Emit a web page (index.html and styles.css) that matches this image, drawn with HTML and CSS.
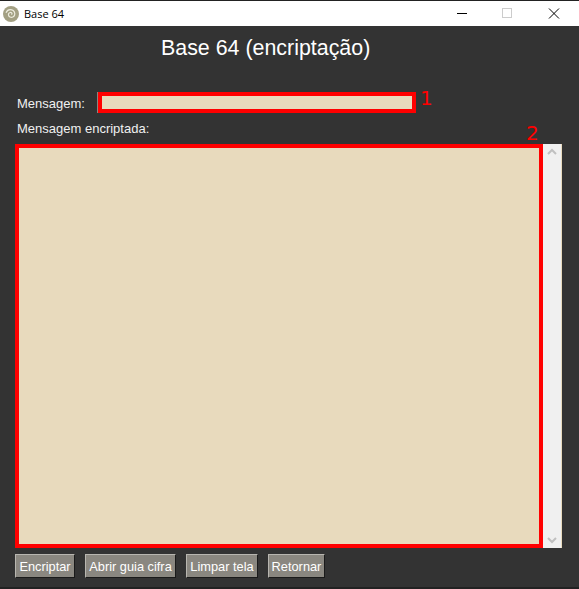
FILE: index.html
```html
<!DOCTYPE html>
<html lang="pt">
<head>
    <meta charset="UTF-8">
    <meta name="viewport" content="width=device-width, initial-scale=1.0">
    <title>Base 64</title>
    <link rel="stylesheet" href="styles.css">
</head>
<body>

<div class="window">
    <div class="titlebar">
        <svg class="app-icon" width="16" height="16" viewBox="0 0 16 16">
            <circle cx="8" cy="8" r="8" fill="#a3a083"/>
            <path d="M8.300 8.400c.7-.2.9-1 .4-1.500-.8-.8-2.300-.5-2.900.5-.8 1.300-.1 3 1.300 3.600 1.800.8 3.900-.2 4.500-2 .7-2.200-.6-4.500-2.800-5.100C6.500 3.300 4 4.500 3 6.800" fill="none" stroke="#eeeddf" stroke-width="1.200"/>
        </svg>
        <span class="window-title">Base 64</span>
        <div class="window-controls">
            <svg class="control" width="46" height="25" viewBox="0 0 46 25"><path d="M18 12.500h10" stroke="#000" fill="none"/></svg>
            <svg class="control" width="46" height="25" viewBox="0 0 46 25"><rect x="17.500" y="7.500" width="9" height="9" stroke="#ccc" fill="none"/></svg>
            <svg class="control" width="46" height="25" viewBox="0 0 46 25"><path d="M18 7.500l10 10M28 7.500l-10 10" stroke="#000" fill="none"/></svg>
        </div>
    </div>

    <div class="content">
        <h1>Base 64 (encriptação)</h1>

        <div class="message-row">
            <label class="field-label" for="message">Mensagem:</label>
            <div class="message-field">
                <input id="message" class="message-input" type="text">
                <span class="marker marker-one">1</span>
            </div>
        </div>

        <div class="field-label encrypted-label">Mensagem encriptada:</div>

        <div class="output-row">
            <textarea class="output-text"></textarea>
            <span class="marker marker-two">2</span>
            <div class="scrollbar">
                <svg width="18" height="16" viewBox="0 0 18 16"><path d="M5 10l4-4 4 4" fill="none" stroke="#c0c0c0" stroke-width="2"/></svg>
                <svg width="18" height="16" viewBox="0 0 18 16"><path d="M5 6l4 4 4-4" fill="none" stroke="#c0c0c0" stroke-width="2"/></svg>
            </div>
        </div>

        <div class="buttons">
            <button class="btn-encrypt">Encriptar</button>
            <button class="btn-guide">Abrir guia cifra</button>
            <button class="btn-clear">Limpar tela</button>
            <button class="btn-back">Retornar</button>
        </div>
    </div>
</div>

</body>
</html>
```

FILE: styles.css
```css
/* Reset */
* {
    margin: 0;
    padding: 0;
    box-sizing: border-box;
}

body {
    width: 579px;
    height: 589px;
    overflow: hidden;
    background: #333333;
    font-family: 'Liberation Sans', Arial, sans-serif;
}

/* Window frame */
.window {
    height: 589px;
    display: flex;
    flex-direction: column;
    border-top: 1px solid #222;
    border-bottom: 2px solid #222;
}

.titlebar {
    height: 25px;
    flex: none;
    display: flex;
    align-items: center;
    background: #ffffff;
    padding-left: 3px;
}

.app-icon {
    margin-right: 5px;
}

.window-title {
    font-family: 'Open Sans', sans-serif;
    font-size: 11px;
    color: #000;
}

.window-controls {
    margin-left: auto;
    margin-right: 2px;
    display: flex;
}

/* Content */
.content {
    flex: 1;
    padding: 10px 17px 0 15px;
    display: flex;
    flex-direction: column;
}

h1 {
    font-size: 21.4px;
    font-weight: normal;
    line-height: 24px;
    color: #ffffff;
    padding-left: 146px;
    height: 56px;
}

.field-label {
    font-size: 13px;
    color: #f0f0f0;
    padding-left: 2px;
}

.message-row {
    display: flex;
    align-items: center;
    height: 21px;
}

.message-row .field-label {
    width: 82px;
    flex: none;
    padding-top: 1px;
}

.message-field {
    position: relative;
    border-left: 1px solid #8a8780;
}

.message-input {
    display: block;
    width: 318px;
    height: 21px;
    background: #e8dabd;
    border: 4px solid #ff0000;
    outline: none;
}

/* Red annotation numbers drawn over the screenshot */
.marker {
    position: absolute;
    font-family: 'DejaVu Sans', sans-serif;
    font-size: 20px;
    line-height: 24px;
    color: #ff0000;
}

.marker-one {
    left: 322px;
    top: -6px;
}

.marker-two {
    left: 511px;
    top: -23px;
}

.encrypted-label {
    margin-top: 9px;
    height: 22px;
    line-height: 14px;
}

.output-row {
    position: relative;
    display: flex;
    height: 404px;
}

.output-text {
    display: block;
    width: 528px;
    height: 404px;
    background: #e8dabd;
    border: 4px solid #ff0000;
    outline: none;
    resize: none;
}

.scrollbar {
    width: 19px;
    background: #f0f0f0;
    border-right: 1px solid #e8dabd;
    display: flex;
    flex-direction: column;
    justify-content: space-between;
}

/* Buttons */
.buttons {
    display: flex;
    gap: 10px;
    margin-top: 6px;
}

button {
    height: 24px;
    padding: 0;
    font-family: 'Liberation Sans', Arial, sans-serif;
    font-size: 12.8px;
    color: #ffffff;
    background: #8a8780;
    border: 1px solid;
    border-color: #b8b6b0 #1a1a1a #1a1a1a #b8b6b0;
}

.btn-encrypt {
    width: 60px;
}

.btn-guide {
    width: 91px;
}

.btn-clear {
    width: 72px;
}

.btn-back {
    width: 57px;
}
```
